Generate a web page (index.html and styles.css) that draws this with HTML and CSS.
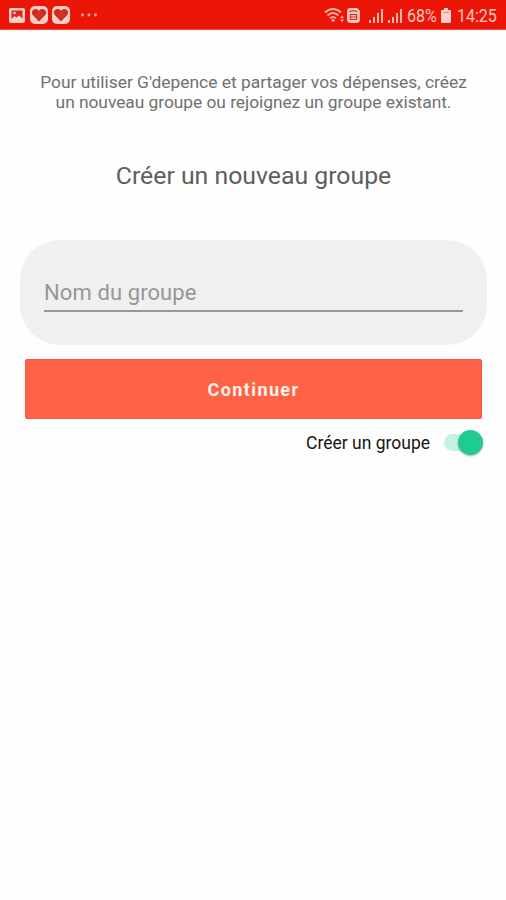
FILE: index.html
```html
<!DOCTYPE html>
<html lang="fr">
<head>
<meta charset="utf-8">
<title>G'depence</title>
<link rel="stylesheet" href="styles.css">
</head>
<body>
<header class="status">
  <svg class="status-left" width="100" height="30" viewBox="0 0 100 30">
    <rect x="9" y="8" width="16" height="15" rx="2" fill="#ffcfc5"/>
    <path d="M11.5 10.500h11v8l-3.500-3-2.500 2-2-1.500-3 3z" fill="#d8281a"/>
    <circle cx="14.500" cy="13" r="1.300" fill="#ffcfc5"/>
    <rect x="30" y="6" width="18" height="18" rx="5" fill="#ffcfc5"/>
    <g id="heart">
      <path d="M39 21.500l-6-6.200c-2.600-3.200 0-6.800 3.200-6.300 1.300.2 2.300 1 2.800 2 .5-1 1.500-1.800 2.800-2 3.200-.5 5.800 3.100 3.200 6.300z" fill="#cf2a20"/>
      <path d="M36 16.500l5-5M38 18.500l5-5" stroke="#dc5045" stroke-width=".8"/>
    </g>
    <rect x="52" y="6" width="18" height="18" rx="5" fill="#ffcfc5"/>
    <use href="#heart" x="22"/>
    <g fill="#ffb0a3"><circle cx="82.500" cy="15" r="1.400"/><circle cx="89" cy="15" r="1.400"/><circle cx="95.500" cy="15" r="1.400"/></g>
  </svg>
  <div class="status-right">
    <svg width="82" height="30" viewBox="324 0 82 30">
      <g fill="none" stroke="#ffb5a8" stroke-width="1.700">
        <path d="M325 12.500q8-7 16 0M327.500 15.500q5.500-5 11 0M330 18.300q3-2.800 6 0"/>
      </g>
      <circle cx="333" cy="20.300" r="1.500" fill="#ffb5a8"/>
      <path d="M340 18l2-2.500 2 2.500zM340 19.500h4l-2 2.500z" fill="#ffb5a8"/>
      <path d="M350 8h7l3 3v8q0 4-4 4h-5q-4 0-4-4v-7q0-4 3-4z" fill="#ffc6bb"/>
      <path d="M349.500 12q4-2.500 8 0M350.500 14.500h6v5h-6zM350.500 17h6" fill="none" stroke="#df2b1c" stroke-width="1.200"/>
      <g id="signal" fill="#ffb5a8">
        <rect x="369" y="20" width="2" height="3"/><rect x="373" y="17" width="2" height="6"/>
        <rect x="377" y="13" width="2" height="10"/><rect x="381" y="9" width="2" height="14"/>
      </g>
      <use href="#signal" x="19"/>
    </svg>
    <span class="percent">68%</span>
    <svg class="battery" width="12" height="30" viewBox="0 0 12 30">
      <path d="M4 8h4v2h2q1 0 1 1v11q0 1-1 1h-8q-1 0-1-1v-11q0-1 1-1h2z" fill="#ffd1c8"/>
      <path d="M3 12.500h6" stroke="#f18070" stroke-width="1"/>
    </svg>
    <span class="clock">14:25</span>
  </div>
</header>
<main class="page">
  <p class="intro"><span class="line-a">Pour utiliser G'depence et partager vos dépenses, créez</span><br><span class="line-b">un nouveau groupe ou rejoignez un groupe existant.</span></p>
  <h1 class="title">Créer un nouveau groupe</h1>
  <section class="card"><input class="field" type="text" placeholder="Nom du groupe" aria-label="Nom du groupe"></section>
  <button class="continue" type="button">Continuer</button>
  <div class="toggle-row">
    <span class="toggle-label">Créer un groupe</span>
    <span class="switch"><span class="thumb"></span></span>
  </div>
</main>
</body>
</html>
```
FILE: styles.css
```css
* { box-sizing: border-box; }
body { margin: 0; min-height: 900px; background: #fdfefd; font-family: Roboto, sans-serif; }
.status { display: flex; justify-content: space-between; height: 30px; background: #eb1608; border-bottom: 1px solid #f0483b; color: #ffc9bf; }
.status svg { display: block; }
.status-right { display: flex; width: 182px; }
.percent, .clock { display: block; flex: none; font-size: 18px; line-height: 32px; height: 29px; transform-origin: left center; white-space: nowrap; }
.percent { width: 34px; padding-left: 1px; transform: scaleX(.89); }
.clock { width: 44px; margin-left: 4px; padding-left: 1px; transform: scaleX(.89); }
.page { display: flex; flex-direction: column; padding: 42px 0 0; }
.intro { margin: 0; padding-left: 1px; text-align: center; font-size: 17.400px; line-height: 20px; color: #707070; }
.line-b { letter-spacing: -.05px; }
.title { margin: 45px 0 0; padding-left: 1px; text-align: center; font-size: 24.800px; line-height: 38px; font-weight: 400; color: #5e5e5e; }
.card { height: 105px; margin: 45px 19px 0 20px; padding: 36px 24px 0; border-radius: 40px; background: #f0f0f0; }
.field { display: block; width: 100%; height: 36px; padding: 0 0 1px; border: 0; border-bottom: 2px solid #969696; background: none; font: 22px Roboto, sans-serif; letter-spacing: .1px; outline: 0; }
.field::placeholder { color: #969696; opacity: 1; }
.continue { height: 60px; margin: 14px 24px 0 25px; padding: 0; border: 1px solid #f55a3e; border-radius: 2px; background: #ff6347; color: #fff0ea; font: 700 18px Roboto, sans-serif; letter-spacing: 1.400px; }
.toggle-row { display: flex; justify-content: flex-end; align-items: center; height: 26px; margin: 10px 23px 0 0; }
.toggle-label { margin-right: 14px; padding-top: 2px; font-size: 17.500px; line-height: 26px; color: #151515; }
.switch { display: flex; justify-content: flex-end; align-items: center; width: 39px; height: 17px; border-radius: 9px; background: #c5f2e2; }
.thumb { flex: none; width: 25px; height: 25px; border-radius: 50%; background: #20cb91; box-shadow: 0 1px 2px #0005; }
```
